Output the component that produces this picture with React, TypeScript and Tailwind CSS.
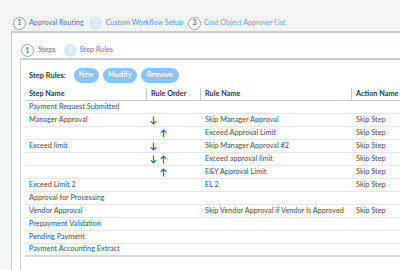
const rows: { step: string; order: ('down' | 'up' | null)[]; rule: string; action: string }[] = [
	{ step: 'Payment Request Submitted', order: [null, null], rule: '', action: '' },
	{ step: 'Manager Approval', order: ['down', null], rule: 'Skip Manager Approval', action: 'Skip Step' },
	{ step: '', order: [null, 'up'], rule: 'Exceed Approval Limit', action: 'Skip Step' },
	{ step: 'Exceed limit', order: ['down', null], rule: 'Skip Manager Approval #2', action: 'Skip Step' },
	{ step: '', order: ['down', 'up'], rule: 'Exceed approval limit', action: 'Skip Step' },
	{ step: '', order: [null, 'up'], rule: 'E&Y Approval Limit', action: 'Skip Step' },
	{ step: 'Exceed Limit 2', order: [null, null], rule: 'EL 2', action: 'Skip Step' },
	{ step: 'Approval for Processing', order: [null, null], rule: '', action: '' },
	{ step: 'Vendor Approval', order: [null, null], rule: 'Skip Vendor Approval if Vendor Is Approved', action: 'Skip Step' },
	{ step: 'Prepayment Validation', order: [null, null], rule: '', action: '' },
	{ step: 'Pending Payment', order: [null, null], rule: '', action: '' },
	{ step: 'Payment Accounting Extract', order: [null, null], rule: '', action: '' },
];

function Arrow({ dir }: { dir: 'down' | 'up' | null }) {
	if (!dir) return <span className="w-[7px]" />;
	return (
		<svg width="7" height="9" viewBox="0 0 7 9" className="shrink-0">
			{dir === 'down' ? (
				<path d="M3.5 0.5V8M0.8 5.2L3.5 8L6.2 5.2" fill="none" stroke="#1b6fd0" strokeWidth="1.2" />
			) : (
				<path d="M3.5 8.5V1M0.8 3.8L3.5 1L6.2 3.8" fill="none" stroke="#1b6fd0" strokeWidth="1.2" />
			)}
		</svg>
	);
}

function StepCircle({ n, active }: { n: number; active?: boolean }) {
	return (
		<span
			className={`flex items-center justify-center size-[13px] rounded-full text-[7.5px] leading-none ${
				active ? 'bg-[#d6e8fb] text-white' : 'border border-[#9aa3ad] text-[#4a4f55] bg-white'
			}`}
		>
			{n}
		</span>
	);
}

export default function App() {
	return (
		<div className="w-[400px] h-[270px] overflow-hidden bg-[#f4f5f6] font-['Lato',sans-serif]">
			{/* Top wizard steps */}
			<div className="pt-[16px] pl-[13px] h-[30px] flex items-center text-[7.2px] whitespace-nowrap">
				<StepCircle n={1} />
				<span className="ml-[3px] text-[#3f7fd0]">Approval Routing</span>
				<span className="ml-[5px]"><StepCircle n={2} active /></span>
				<span className="ml-[4px] text-[#5a95dc]">Custom Workflow Setup</span>
				<span className="ml-[5px]"><StepCircle n={3} /></span>
				<span className="ml-[3px] text-[#6ea6e6]">Cost Object Approver List</span>
			</div>

			{/* Outer panel */}
			<div className="mt-[1px] ml-[11px] w-[420px] h-[240px] bg-white border-t-2 border-l border-[#c6ced7]">
				<div className="pt-[11px] pl-[9px] h-[24px] flex items-center text-[7.3px] whitespace-nowrap">
					<StepCircle n={1} />
					<span className="ml-[4px] text-[#3f7fd0]">Steps</span>
					<span className="ml-[8px]"><StepCircle n={2} active /></span>
					<span className="ml-[3px] text-[#4a88d6]">Step Rules</span>
				</div>

				{/* Inner panel */}
				<div className="mt-[1px] ml-[8px] h-[220px] border-t-2 border-l border-[#c6ced7]">
					<div className="pt-[8px] pl-[8px] flex items-center gap-[4px] h-[23px]">
						<span className="text-[7.5px] font-bold text-[#32363a] mr-[4px]">Step Rules:</span>
						<button className="h-[15px] w-[25px] rounded-full bg-[#8ec3f6] text-white text-[7.3px] font-bold">New</button>
						<button className="h-[15px] w-[34px] rounded-full bg-[#8ec3f6] text-white text-[7.3px] font-bold">Modify</button>
						<button className="h-[15px] w-[38px] rounded-full bg-[#8ec3f6] text-white text-[7.3px] font-bold">Remove</button>
					</div>

					{/* Table */}
					<div className="mt-[5px] ml-[4px] text-[7.3px] whitespace-nowrap">
						<div className="grid grid-cols-[121px_54px_151px_80px] h-[13px] border-b border-[#c3c9d0] font-bold text-[#32363a]">
							<div className="pl-[4px] flex items-center">Step Name</div>
							<div className="pl-[4px] flex items-center border-l border-[#c3c9d0]">Rule Order</div>
							<div className="pl-[4px] flex items-center border-l border-[#c3c9d0]">Rule Name</div>
							<div className="pl-[4px] flex items-center border-l border-[#c3c9d0]">Action Name</div>
						</div>
						{rows.map((r, i) => (
							<div
								key={i}
								className={`grid grid-cols-[121px_54px_151px_80px] h-[13px] text-[#4a4f55] ${
									i === rows.length - 1 ? 'border-b-2 border-[#d3d8de]' : 'border-b border-[#e3e6ea]'
								}`}
							>
								<div className="pl-[4px] flex items-center">{r.step}</div>
								<div className="pl-[4px] flex items-center gap-[2.5px]">
									<Arrow dir={r.order[0]} />
									<Arrow dir={r.order[1]} />
								</div>
								<div className="pl-[5px] flex items-center">{r.rule}</div>
								<div className="pl-[5px] flex items-center">{r.action}</div>
							</div>
						))}
					</div>
				</div>
			</div>
		</div>
	);
}
